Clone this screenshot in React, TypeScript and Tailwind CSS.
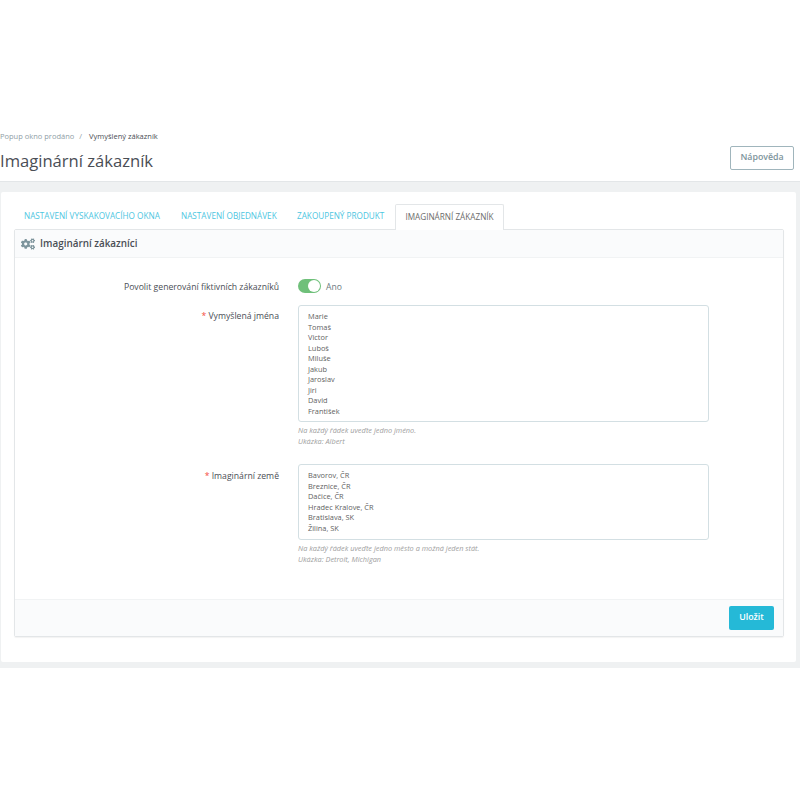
import React from 'react';
import { FaCogs } from 'react-icons/fa';

const jmena = ['Marie', 'Tomaš', 'Victor', 'Luboš', 'Miluše', 'Jakub', 'Jaroslav', 'Jiri', 'David', 'František'];
const zeme = ['Bavorov, ČR', 'Breznice, ČR', 'Dačice, ČR', 'Hradec Kralove, ČR', 'Bratislava, SK', 'Žilina, SK'];

function Seznam({ radky, vyska }: { radky: string[]; vyska: string }) {
  return (
    <div className={`w-[411px] ${vyska} border border-[#d3dfe3] rounded-[3px] bg-white pl-[9px] pt-[5px] text-[7.4px] leading-[10.55px] text-[#5f5f5f]`}>
      {radky.map((r) => (
        <div key={r}>{r}</div>
      ))}
    </div>
  );
}

function Napoveda({ radek1, radek2 }: { radek1: string; radek2: string }) {
  return (
    <div className="mt-[3px] text-[7.35px] leading-[10.5px] italic text-[#a0a0a0]">
      <div>{radek1}</div>
      <div>{radek2}</div>
    </div>
  );
}

export default function App() {
  return (
    <div className="w-[800px] h-[800px] bg-white font-['Open_Sans',sans-serif] text-[#4a4e55]">
      <div className="h-[182px] pt-[131px] border-b border-[#e3e6e8] relative">
        <div className="h-[11px] flex items-center text-[7.5px] leading-[11px] whitespace-nowrap">
          <span className="text-[#8f9ea6]">Popup okno prodáno</span>
          <span className="ml-[5px] mr-[7px] text-[#8f9ea6]">/</span>
          <span>Vymyšlený zákazník</span>
        </div>
        <h1 className="mt-[7px] text-[16.6px] leading-[23px] font-normal">Imaginární zákazník</h1>
        <button className="absolute right-[6px] top-[146px] w-[64px] h-[24px] border border-[#a0b5bc] rounded-[2px] bg-white text-[8.8px] font-semibold text-[#7d949c]">
          Nápověda
        </button>
      </div>

      <div className="h-[486px] bg-[#eff1f2] pt-[10px] pl-[1px] pr-[4px]">
        <div className="h-[470px] bg-white rounded-[2px] pt-[12px] pl-[13px] pr-[12px]">
          <div className="h-[25px] flex items-stretch text-[8.2px] text-[#4dc6df] relative z-10 pl-[10px] whitespace-nowrap">
            <div className="w-[136px] flex items-center">NASTAVENÍ VYSKAKOVACÍHO OKNA</div>
            <div className="ml-[21px] w-[95px] flex items-center">NASTAVENÍ OBJEDNÁVEK</div>
            <div className="ml-[21px] w-[88px] flex items-center">ZAKOUPENÝ PRODUKT</div>
            <div className="ml-[10px] w-[109px] h-[26px] flex items-center justify-center bg-white border border-b-0 border-[#e3e6e8] rounded-t-[2px] text-[#6b6b6b]">
              IMAGINÁRNÍ ZÁKAZNÍK
            </div>
          </div>

          <div className="h-[408px] border border-[#e3e6e8] rounded-[2px] shadow-[0_1px_1px_rgba(0,0,0,0.05)] flex flex-col">
            <div className="h-[28px] shrink-0 bg-[#fafbfc] border-b border-[#f1f3f4] flex items-center pl-[6px] gap-[5px]">
              <FaCogs size={14} className="text-[#7d949c]" />
              <span className="text-[9.9px] font-semibold">Imaginární zákazníci</span>
            </div>

            <div className="flex-1 pt-[21px]">
              <div className="flex items-center h-[15px]">
                <div className="w-[264px] text-right text-[8.66px] leading-[12px]">Povolit generování fiktivních zákazníků</div>
                <div className="ml-[19px] flex items-center">
                  <div className="w-[23px] h-[14px] rounded-full bg-[#6fc07a] flex items-center justify-end pr-[1px]">
                    <div className="w-[12px] h-[12px] rounded-full bg-white" />
                  </div>
                  <span className="ml-[5px] mt-[2px] text-[8.6px] text-[#6c7a80]">Ano</span>
                </div>
              </div>

              <div className="flex mt-[11px]">
                <div className="w-[264px] text-right text-[8.66px] leading-[12px] pt-[5px]">
                  <span className="text-[#f54c3e]">*</span> Vymyšlená jména
                </div>
                <div className="ml-[19px]">
                  <Seznam radky={jmena} vyska="h-[117px]" />
                  <Napoveda radek1="Na každý řádek uveďte jedno jméno." radek2="Ukázka: Albert" />
                </div>
              </div>

              <div className="flex mt-[18px]">
                <div className="w-[264px] text-right text-[8.66px] leading-[12px] pt-[6px]">
                  <span className="text-[#f54c3e]">*</span> Imaginární země
                </div>
                <div className="ml-[19px]">
                  <Seznam radky={zeme} vyska="h-[76px]" />
                  <Napoveda radek1="Na každý řádek uveďte jedno město a možná jeden stát." radek2="Ukázka: Detroit, Michigan" />
                </div>
              </div>
            </div>

            <div className="h-[37px] shrink-0 bg-[#fafbfc] border-t border-[#f1f3f4] flex items-center justify-end pr-[9px]">
              <button className="w-[45px] h-[24px] rounded-[2px] bg-[#25b9d7] text-white text-[8.8px] font-semibold">Uložit</button>
            </div>
          </div>
        </div>
      </div>
    </div>
  );
}
